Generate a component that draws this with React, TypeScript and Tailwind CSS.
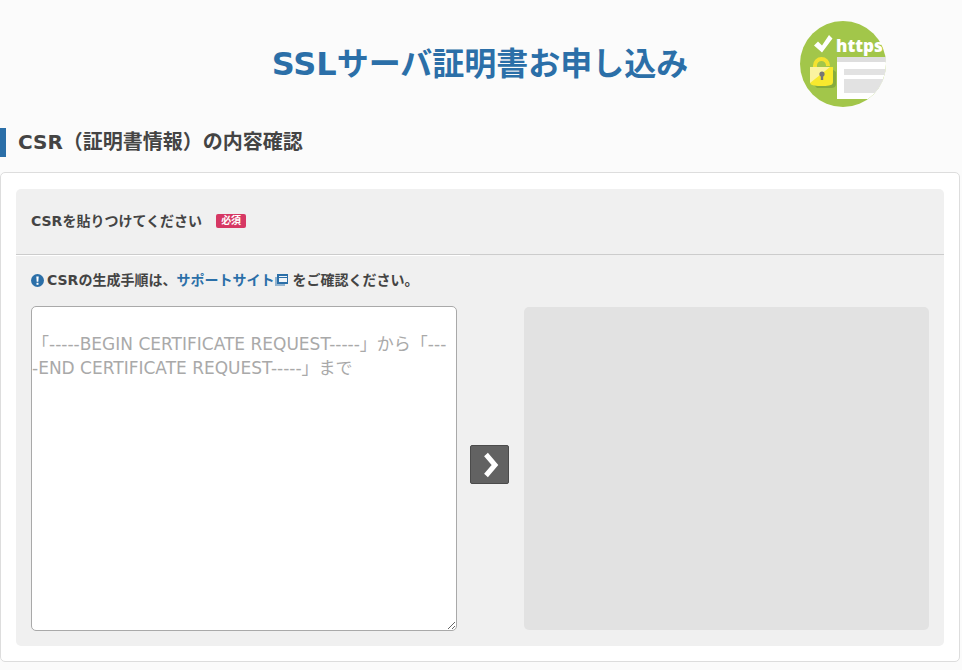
import React from "react";

function HttpsLogo() {
  return (
    <svg viewBox="0 0 86 86" className="h-[86px] w-[86px]" role="img" aria-label="https">
      <defs>
        <clipPath id="logo-circle">
          <circle cx="43" cy="43" r="43" />
        </clipPath>
      </defs>
      <g clipPath="url(#logo-circle)">
        <rect width="86" height="86" fill="#a2c64a" />
        <rect x="37" y="36" width="49" height="42" fill="#fff" />
        <rect x="37" y="36" width="49" height="5" fill="#dedede" />
        <rect x="44" y="48" width="42" height="6" fill="#e2e2e2" />
        <rect x="44" y="58" width="42" height="14" fill="#e2e2e2" />
        <path d="M14 24.500l4-4 4 4 7-10.500 3.500 3.500-10.500 14z" fill="#fff" />
        <path d="M13 63l4 4h14q5 0 5-4v-12l-4-3z" fill="#86ab3d" />
        <path d="M15 47v-2.500a6.500 6.500 0 0 1 13 0v0.500" fill="none" stroke="#f3e22f" strokeWidth="4" />
        <path d="M10 46h23v15q0 3-4 3.500-7 1-15 0-4-.5-4-3.500z" fill="#f8e92e" />
        <path d="M10 46h20L10 62z" fill="#fbf3a0" />
        <circle cx="22" cy="53" r="2.600" fill="#777575" />
        <path d="M20.800 54h2.400v5h-2.400z" fill="#777575" />
      </g>
      <text x="36" y="31" fill="#fff" fontSize="17" fontWeight="800" fontFamily="'Open Sans', 'Noto Sans', sans-serif">
        https
      </text>
    </svg>
  );
}

function NoticeIcon() {
  return (
    <svg viewBox="0 0 13 13" className="h-[13px] w-[13px] shrink-0" aria-hidden="true">
      <circle cx="6.500" cy="6.500" r="6.500" fill="#2b6fa8" />
      <path d="M5.300 2.500h2.400L7.300 7.800H5.700z" fill="#fff" />
      <rect x="5.500" y="8.800" width="2" height="2" fill="#fff" />
    </svg>
  );
}

function NewWindowIcon() {
  return (
    <svg viewBox="0 0 13 12" className="h-[12px] w-[13px] shrink-0" aria-hidden="true">
      <path d="M0 3h10v9H0z" fill="#92b3cf" />
      <path d="M2 0h11v10H2z" fill="#2b6fa8" />
      <path d="M4 2h8v1H4zM4 4h8v4H4z" fill="#f0f4f8" />
    </svg>
  );
}

export default function App() {
  return (
    <div className="min-h-screen bg-[#fbfbfb] pt-[21px] pb-2 font-['DejaVu_Sans','Noto_Sans_CJK_JP',sans-serif] text-[#444]">
      <header className="mr-[2px] grid grid-cols-[1fr_auto_1fr] items-center">
        <h1 className="col-start-2 text-[32px] leading-[48px] font-bold text-[#2b6fa8]">SSLサーバ証明書お申し込み</h1>
        <div className="ml-28">
          <HttpsLogo />
        </div>
      </header>

      <main className="mr-[2px] mt-[21px]">
        <h2 className="border-l-6 border-[#2b6fa8] pl-3 text-[20px] leading-[29px] font-bold">
          CSR（証明書情報）の内容確認
        </h2>

        <section className="mt-[15px] rounded-[5px] border border-[#ddd] bg-white px-[15px] pt-4 pb-[15px]">
          <div className="rounded-[5px] bg-[#f0f0f0] text-[14px] leading-5 font-bold">
            <div className="flex h-[66px] items-center border-b border-[#ccc] px-[15px] pb-[2px]">
              <label htmlFor="csr">CSRを貼りつけてください</label>
              <span className="ml-[14px] rounded-[2px] bg-[#d63864] px-[5px] text-[10px] leading-[14px] text-white">
                必須
              </span>
            </div>
            <div className="h-px w-[454px] bg-white" />

            <div className="px-[15px] pt-[14px] pb-[15px]">
              <p className="flex items-center">
                <NoticeIcon />
                <span className="ml-[3px]">CSRの生成手順は、</span>
                <a href="#support" className="flex items-center gap-px text-[#2b6fa8]">
                  サポートサイト
                  <NewWindowIcon />
                </a>
                <span className="ml-1">をご確認ください。</span>
              </p>

              <div className="mt-4 flex items-center">
                <textarea
                  id="csr"
                  className="block h-[325px] min-w-0 flex-[424] resize rounded-[5px] border border-[#a9a9a9] bg-white pt-px text-[17px] leading-6 font-normal placeholder:text-[#a9a9a9]"
                  placeholder={"\n「-----BEGIN CERTIFICATE REQUEST-----」から「---\n-END CERTIFICATE REQUEST-----」まで"}
                />
                <button
                  type="button"
                  aria-label="内容を確認"
                  className="mr-[15px] mb-2 ml-[13px] flex h-[39px] w-[39px] shrink-0 items-center justify-center rounded-[2px] border border-[#4b4b4b] bg-[#626262]"
                >
                  <svg viewBox="0 0 37 37" className="h-[37px] w-[37px]" aria-hidden="true">
                    <path d="M15 8.500L24 19l-9 10.500" fill="none" stroke="#fff" strokeWidth="5" />
                  </svg>
                </button>
                <div className="h-[323px] min-w-0 flex-[405] rounded-[5px] bg-[#e2e2e2]" />
              </div>
            </div>
          </div>
        </section>
      </main>
    </div>
  );
}
